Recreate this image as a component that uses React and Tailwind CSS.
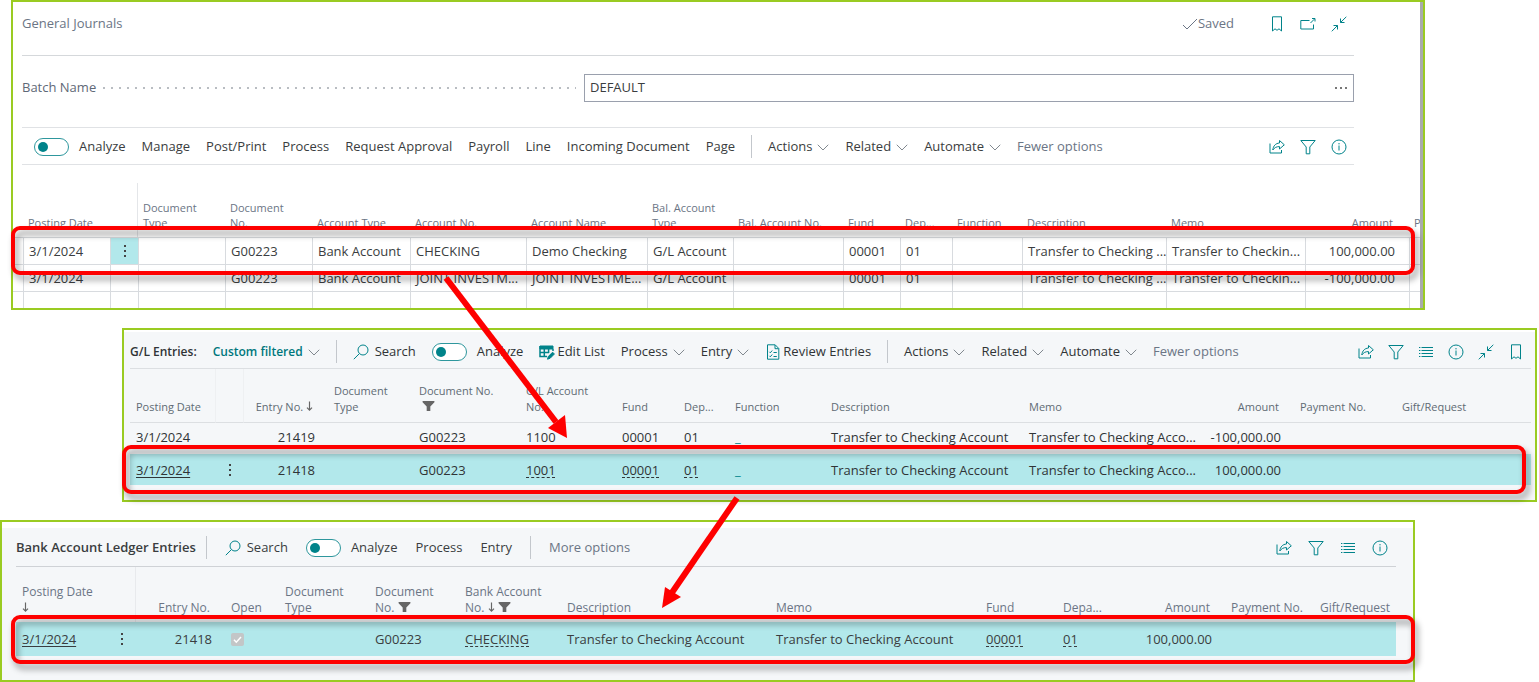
const Icon = ({ children, size = 'size-4', color = 'text-[#00838a]' }) => (
  <svg viewBox="0 0 16 16" className={`${size} ${color} shrink-0`} fill="none" stroke="currentColor" aria-hidden="true">
    {children}
  </svg>
);

const ShareIcon = () => (
  <Icon>
    <path d="M1 4.5V14H12.5V11" />
    <path d="M10.5 1.5L15.3 5.8L10.5 10V7.6C7.5 7.5 5.5 8.6 3.8 11C4.2 7 6.5 4.3 10.5 4Z" />
  </Icon>
);

const FilterIcon = () => (
  <Icon>
    <path d="M0.8 1.5H15.2L9.8 8V14.8H6.2V8Z" />
  </Icon>
);

const InfoIcon = () => (
  <Icon>
    <circle cx="8" cy="8" r="7" />
    <path d="M8 6.5V11.5M8 4V5.4" />
  </Icon>
);

const ListIcon = () => (
  <Icon>
    <path d="M3.5 3.5H15M3.5 6.5H15M3.5 9.5H15M3.5 12.5H15" />
    <path d="M1 3.5H2.4M1 6.5H2.4M1 9.5H2.4M1 12.5H2.4" />
  </Icon>
);

const CollapseIcon = () => (
  <Icon>
    <path d="M15.3 0.8L9.5 6.5M9.5 2.5V6.5H13.5" />
    <path d="M0.8 15.3L6.5 9.5M2.5 9.5H6.5V13.5" />
  </Icon>
);

const BookmarkIcon = () => (
  <Icon>
    <path d="M3.5 0.8H12.5V15L10 12.8L8 14.3L6 12.8L3.5 15Z" />
  </Icon>
);

const PopOutIcon = () => (
  <Icon>
    <path d="M9.5 4.5H0.8V13H13.5V8.5" />
    <path d="M10.5 7L14.4 3.1M12 2.5H15V5.5" />
  </Icon>
);

const SearchIcon = () => (
  <Icon>
    <circle cx="10" cy="6" r="5" />
    <path d="M6.4 9.6L0.8 15.2" />
  </Icon>
);

const EditListIcon = () => (
  <Icon>
    <path d="M1 2H14V5H1Z" fill="currentColor" />
    <path d="M1 2V12.5H8M1 8.5H10M5.3 5V12.5M9.6 5V9M14 5V7" strokeWidth="1.5" />
    <path d="M8.5 15.2L9.3 12.5L13.6 8.2L15.4 10L11.1 14.3Z" fill="currentColor" />
  </Icon>
);

const ReviewIcon = () => (
  <Icon>
    <path d="M2.5 0.8H10.2L13.8 4.5V15.2H2.5Z" />
    <path d="M10 1V4.7H13.6" />
    <path d="M4.3 7.8L5.3 8.8L7.2 6.5M4.3 11.8L5.3 12.8L7.2 10.5" />
    <path d="M8.5 8.5H11.8M8.5 12.5H11.8" />
  </Icon>
);

const CheckIcon = () => (
  <Icon color="text-[#6b7585]">
    <path d="M1 9L5 13L15 3" />
  </Icon>
);

const ChevronIcon = () => (
  <Icon size="size-3" color="text-[#7d858c]">
    <path d="M1 5L8 12L15 5" strokeWidth="1.3" />
  </Icon>
);

const SortIcon = () => (
  <svg viewBox="0 0 8 12" className="inline h-[10px] w-[7px] align-baseline text-[#666]" fill="none" stroke="currentColor" aria-hidden="true">
    <path d="M4 0.5V11M1 8L4 11L7 8" strokeWidth="1.4" />
  </svg>
);

const FunnelIcon = () => (
  <svg viewBox="0 0 14 11" className="inline h-[10px] w-[13px] align-baseline text-[#666]" fill="currentColor" aria-hidden="true">
    <path d="M0.5 0H13.5V1.5L9 6V11H5V6L0.5 1.5Z" />
  </svg>
);

const MoreDots = () => (
  <button type="button" aria-label="Show more options" className="flex h-5 w-full items-center justify-center">
    <svg viewBox="0 0 4 16" className="h-4 w-1" fill="#444" aria-hidden="true">
      <rect x="1" y="2" width="2" height="2" />
      <rect x="1" y="7" width="2" height="2" />
      <rect x="1" y="12" width="2" height="2" />
    </svg>
  </button>
);

const IconButton = ({ label, children }) => (
  <button type="button" aria-label={label}>{children}</button>
);

const MenuButton = ({ children, menu, icon, muted, gap = 'gap-[5px]' }) => (
  <button type="button" className={`flex items-center ${gap} ${muted ? 'text-[#6b7585]' : ''}`}>
    {icon}
    {children}
    {menu && <ChevronIcon />}
  </button>
);

const Toggle = () => (
  <label className="flex items-center gap-[10px]">
    <input
      type="checkbox"
      className="relative h-[18px] w-[35px] shrink-0 appearance-none rounded-full border border-[#2e979d] bg-white before:absolute before:left-[3px] before:top-[3px] before:size-[10px] before:rounded-full before:bg-[#00838a]"
    />
    Analyze
  </label>
);

const Divider = () => <span className="h-[23px] w-px bg-[#c3c7cc]" />;

// Red rounded box laid over a row of the grid
const Highlight = ({ className }) => (
  <div className={`pointer-events-none absolute z-10 h-[49px] rounded-[9px] border-4 border-[#fe0000] drop-shadow-[3px_5px_3px_rgba(0,0,0,0.4)] ${className}`} />
);

const Lookup = ({ children }) => (
  <a href="#" className="underline decoration-dashed decoration-1 underline-offset-2">{children}</a>
);

const DateLink = ({ children }) => (
  <a href="#" className="underline decoration-1 underline-offset-2">{children}</a>
);

const Cols = ({ widths }) => (
  <colgroup>
    {widths.map((w, i) => <col key={i} style={w ? { width: w } : undefined} />)}
  </colgroup>
);

const journalWidths = [10, 87, 28, 87, 87, 98, 116, 121, 86, 110, 57, 52, 70, 144, 139, 104, null];
const journalHeads = [
  '', 'Posting Date', '', <>Document<br />Type</>, <>Document<br />No.</>, 'Account Type', 'Account No.', 'Account Name',
  <>Bal. Account<br />Type</>, 'Bal. Account No.', 'Fund', 'Dep...', 'Function', 'Description', 'Memo', 'Amount', 'P',
];
const journalRows = [
  ['', '3/1/2024', 'dots', '', 'G00223', 'Bank Account', 'CHECKING', 'Demo Checking', 'G/L Account', '', '00001', '01', '', 'Transfer to Checking ...', 'Transfer to Checkin...', '100,000.00', ''],
  ['', '3/1/2024', '', '', 'G00223', 'Bank Account', 'JOINT INVESTM...', 'JOINT INVESTME...', 'G/L Account', '', '00001', '01', '', 'Transfer to Checking ...', 'Transfer to Checkin...', '-100,000.00', ''],
];

const GeneralJournals = () => (
  <section className="relative ml-[11px] mr-[114px] border-2 border-[#9acb22] bg-white text-[13px] text-[#3a3d40]">
    <div className="flex">
      <div className="min-w-0 flex-1">
        <div className="ml-[9px] mr-[66px]">
          <div className="flex h-[54px] items-center justify-between border-b border-[#d5d8db] pb-[10px] pr-[7px] text-[#6b7585]">
            <h1>General Journals</h1>
            <div className="flex items-center gap-[15px]">
              <span className="mr-[20px] flex items-center">
                <CheckIcon />
                Saved
              </span>
              <IconButton label="Bookmark"><BookmarkIcon /></IconButton>
              <IconButton label="Open in new window"><PopOutIcon /></IconButton>
              <IconButton label="Collapse"><CollapseIcon /></IconButton>
            </div>
          </div>

          <div className="grid h-[71px] grid-cols-[562px_1fr] items-center pb-2">
            <div className="flex items-center gap-1 pr-2 text-[#5f6977]">
              <label htmlFor="batch-name">Batch Name</label>
              <span className="h-[2px] flex-1 bg-[radial-gradient(circle,#b9bdc2_1px,transparent_1px)] bg-[length:8px_2px]" />
            </div>
            <div className="flex h-7 items-center border border-[#9aa0ad] pl-[5px] pr-[5px]">
              <input id="batch-name" type="text" defaultValue="DEFAULT" className="min-w-0 flex-1 outline-none" />
              <button type="button" aria-label="Choose batch">
                <svg viewBox="0 0 14 4" className="h-1 w-[14px]" fill="#777" aria-hidden="true">
                  <rect x="1" y="1" width="2" height="2" />
                  <rect x="6" y="1" width="2" height="2" />
                  <rect x="11" y="1" width="2" height="2" />
                </svg>
              </button>
            </div>
          </div>

          <div className="flex h-[38px] items-center gap-4 whitespace-nowrap border-y border-[#e0e2e5] pl-3 pr-[7px] pt-px">
            <Toggle />
            <MenuButton>Manage</MenuButton>
            <MenuButton>Post/Print</MenuButton>
            <MenuButton>Process</MenuButton>
            <MenuButton>Request Approval</MenuButton>
            <MenuButton>Payroll</MenuButton>
            <MenuButton>Line</MenuButton>
            <MenuButton>Incoming Document</MenuButton>
            <MenuButton>Page</MenuButton>
            <Divider />
            <MenuButton menu>Actions</MenuButton>
            <MenuButton menu>Related</MenuButton>
            <MenuButton menu>Automate</MenuButton>
            <MenuButton muted>Fewer options</MenuButton>
            <div className="ml-auto flex gap-[15px]">
              <IconButton label="Share"><ShareIcon /></IconButton>
              <IconButton label="Filter"><FilterIcon /></IconButton>
              <IconButton label="Details"><InfoIcon /></IconButton>
            </div>
          </div>
        </div>

        <table className="mt-[18px] w-full table-fixed border-separate border-spacing-0 whitespace-nowrap text-left">
          <Cols widths={journalWidths} />
          <thead>
            <tr className="h-[54px] text-[11px] leading-[15px] text-[#6b7585]">
              {journalHeads.map((head, i) => (
                <th
                  key={i}
                  className={`overflow-hidden p-0 pb-[7px] pl-[5px] align-bottom font-normal ${i === 2 ? 'border-r border-[#e4e6e9]' : ''} ${i === 15 ? 'pr-4 text-right' : ''}`}
                >
                  {head}
                </th>
              ))}
            </tr>
          </thead>
          <tbody>
            {journalRows.map((row, r) => (
              <tr key={r} className="h-[27px] leading-5">
                {row.map((cell, i) => (
                  <td
                    key={i}
                    className={`border-t border-[#d8dbdf] p-0 ${i > 0 ? 'border-l' : ''} ${cell === 'dots' ? 'bg-[#b2e8eb]' : 'pl-[5px]'} ${i === 15 ? 'pr-[14px] text-right' : ''}`}
                  >
                    {cell === 'dots' ? <MoreDots /> : cell}
                  </td>
                ))}
              </tr>
            ))}
            <tr className="h-[17px]">
              {journalWidths.map((w, i) => (
                <td key={i} className={`border-t border-[#d8dbdf] p-0 ${i > 0 ? 'border-l' : ''}`} />
              ))}
            </tr>
          </tbody>
        </table>
      </div>
      <div className="w-[3px] bg-[#a9abad]" />
    </div>
    <Highlight className="-left-[2px] right-[8px] top-[224px]" />
  </section>
);

const glWidths = [86, 28, 84, 85, 107, 96, 62, 51, 96, 198, 177, 94, 102, null];
const glHeads = [
  'Posting Date', '', <>Entry No. <SortIcon /></>, <>Document<br />Type</>, <>Document No.<br />&nbsp;<FunnelIcon /></>, <>G/L Account<br />No.</>,
  'Fund', 'Dep...', 'Function', 'Description', 'Memo', 'Amount', 'Payment No.', 'Gift/Request',
];
const glRows = [
  { entry: '21419', account: '1100', amount: '-100,000.00' },
  { entry: '21418', account: '1001', amount: '100,000.00', selected: true },
];

const GLEntries = () => (
  <section className="relative ml-[122px] mr-[2px] border-2 border-[#9acb22] bg-white text-[13px] text-[#303436]">
    <div className="mt-[2px] bg-[#f5f7f9] pb-[15px] pl-[6px] pr-1">
      <div className="flex h-[37px] items-center gap-4 whitespace-nowrap border-b border-[#dcdfe2] pr-[7px] pt-[3px]">
        <h2 className="text-[12px] font-semibold">G/L Entries:</h2>
        <button type="button" className="flex items-center gap-[5px] text-[12px] font-semibold text-[#00777d]">
          Custom filtered <ChevronIcon />
        </button>
        <Divider />
        <MenuButton icon={<SearchIcon />} gap="gap-[6px]">Search</MenuButton>
        <Toggle />
        <MenuButton icon={<EditListIcon />} gap="gap-[2px]">Edit List</MenuButton>
        <MenuButton menu>Process</MenuButton>
        <MenuButton menu>Entry</MenuButton>
        <MenuButton icon={<ReviewIcon />} gap="gap-[2px]">Review Entries</MenuButton>
        <Divider />
        <MenuButton menu>Actions</MenuButton>
        <MenuButton menu>Related</MenuButton>
        <MenuButton menu>Automate</MenuButton>
        <MenuButton muted>Fewer options</MenuButton>
        <div className="ml-auto flex gap-[14px]">
          <IconButton label="Share"><ShareIcon /></IconButton>
          <IconButton label="Filter"><FilterIcon /></IconButton>
          <IconButton label="List view"><ListIcon /></IconButton>
          <IconButton label="Details"><InfoIcon /></IconButton>
          <IconButton label="Collapse"><CollapseIcon /></IconButton>
          <IconButton label="Bookmark"><BookmarkIcon /></IconButton>
        </div>
      </div>

      <table className="w-full table-fixed border-separate border-spacing-0 whitespace-nowrap text-left">
        <Cols widths={glWidths} />
        <thead>
          <tr className="h-[54px] text-[11px] leading-4 text-[#5f6b74]">
            {glHeads.map((head, i) => (
              <th
                key={i}
                className={`border-b border-[#dcdfe2] p-0 pb-[7px] pl-[6px] align-bottom font-normal ${i < 2 ? 'border-r border-r-[#eef0f2]' : ''} ${i === 2 || i === 11 ? 'pr-[15px] text-right' : ''}`}
              >
                {head}
              </th>
            ))}
          </tr>
        </thead>
        <tbody>
          {glRows.map((row) => (
            <tr key={row.entry} className={`h-[31px] *:p-0 *:pl-[6px] ${row.selected ? 'bg-[#b2e8eb] leading-5' : 'align-top leading-7'}`}>
              <td>{row.selected ? <DateLink>3/1/2024</DateLink> : '3/1/2024'}</td>
              <td className="pl-0!">{row.selected && <MoreDots />}</td>
              <td><div className="pr-[13px] text-right">{row.entry}</div></td>
              <td />
              <td>G00223</td>
              <td>{row.selected ? <Lookup>{row.account}</Lookup> : row.account}</td>
              <td>{row.selected ? <Lookup>00001</Lookup> : '00001'}</td>
              <td>{row.selected ? <Lookup>01</Lookup> : '01'}</td>
              <td><a href="#" className="text-[#00838a]">_</a></td>
              <td>Transfer to Checking Account</td>
              <td>Transfer to Checking Acco...</td>
              <td><div className="pr-[13px] text-right">{row.amount}</div></td>
              <td />
              <td />
            </tr>
          ))}
        </tbody>
      </table>
    </div>
    <Highlight className="-left-[2px] right-[9px] top-[115px]" />
  </section>
);

const bankWidths = [92, 28, 89, 54, 90, 90, 102, 209, 210, 77, 73, 95, 89, null];
const bankHeads = [
  <>Posting Date<br /><SortIcon /></>, '', 'Entry No.', 'Open', <>Document<br />Type</>, <>Document<br />No. <FunnelIcon /></>,
  <>Bank Account<br />No. <SortIcon /> <FunnelIcon /></>, 'Description', 'Memo', 'Fund', 'Depa...', 'Amount', 'Payment No.', 'Gift/Request',
];

const BankLedgerEntries = () => (
  <section className="relative mr-[124px] border-2 border-[#9acb22] bg-white text-[13px] text-[#3a3d40]">
    <div className="mt-[6px] bg-[#f5f7f9] pb-6 pl-[14px] pr-[17px]">
      <div className="flex h-[39px] items-center gap-[18px] whitespace-nowrap border-b border-[#cfd2d6] pr-2 pt-px">
        <h2 className="-mr-2 font-semibold">Bank Account Ledger Entries</h2>
        <Divider />
        <MenuButton icon={<SearchIcon />} gap="gap-[6px]">Search</MenuButton>
        <Toggle />
        <MenuButton>Process</MenuButton>
        <MenuButton>Entry</MenuButton>
        <Divider />
        <MenuButton muted>More options</MenuButton>
        <div className="ml-auto flex gap-4">
          <IconButton label="Share"><ShareIcon /></IconButton>
          <IconButton label="Filter"><FilterIcon /></IconButton>
          <IconButton label="List view"><ListIcon /></IconButton>
          <IconButton label="Details"><InfoIcon /></IconButton>
        </div>
      </div>

      <table className="w-full table-fixed border-separate border-spacing-0 whitespace-nowrap text-left">
        <Cols widths={bankWidths} />
        <thead>
          <tr className="h-[55px] text-[12px] leading-4 text-[#6b7585]">
            {bankHeads.map((head, i) => (
              <th
                key={i}
                className={`p-0 pb-[6px] pl-[6px] align-bottom font-normal ${i === 1 ? 'border-r border-[#e8eaed]' : ''} ${i === 2 || i === 11 ? 'pr-[15px] text-right' : ''}`}
              >
                {head}
              </th>
            ))}
          </tr>
        </thead>
        <tbody>
          <tr className="h-[34px] bg-[#b2e8eb] leading-5 *:p-0 *:pl-[6px]">
            <td><DateLink>3/1/2024</DateLink></td>
            <td className="pl-0!"><MoreDots /></td>
            <td><div className="pr-[13px] text-right">21418</div></td>
            <td>
              <span className="relative block size-[13px]">
                <input type="checkbox" aria-label="Open" defaultChecked disabled className="block size-[13px] appearance-none rounded-xs bg-[#c3c6c7]" />
                <svg viewBox="0 0 13 13" className="absolute inset-0" fill="none" stroke="#fff" strokeWidth="1.5" aria-hidden="true">
                  <path d="M3 6.8L5.3 9.2L10 4" />
                </svg>
              </span>
            </td>
            <td />
            <td>G00223</td>
            <td><Lookup>CHECKING</Lookup></td>
            <td>Transfer to Checking Account</td>
            <td>Transfer to Checking Account</td>
            <td><Lookup>00001</Lookup></td>
            <td><Lookup>01</Lookup></td>
            <td><div className="pr-[13px] text-right">100,000.00</div></td>
            <td />
            <td />
          </tr>
        </tbody>
      </table>
    </div>
    <Highlight className="-right-[2px] left-[9px] top-[93px]" />
  </section>
);

const App = () => (
  <main className="relative flex flex-col gap-[18px] overflow-hidden bg-white font-['Open_Sans',sans-serif]">
    <GeneralJournals />
    <GLEntries />
    <BankLedgerEntries />

    {/* Arrows linking the highlighted rows */}
    <svg viewBox="0 0 130 170" className="pointer-events-none absolute left-[440px] top-[270px] z-20 h-[170px] w-[130px]" aria-hidden="true">
      <path d="M6 8L116 152" stroke="#fe0000" strokeWidth="6" />
      <path d="M127 168L108 158L125 145Z" fill="#fe0000" />
    </svg>
    <svg viewBox="0 0 90 120" className="pointer-events-none absolute left-[655px] top-[490px] z-20 h-[120px] w-[90px]" aria-hidden="true">
      <path d="M82 8L16 104" stroke="#fe0000" strokeWidth="6" />
      <path d="M7 118L10 97L26 107Z" fill="#fe0000" />
    </svg>
  </main>
);

export default App;
